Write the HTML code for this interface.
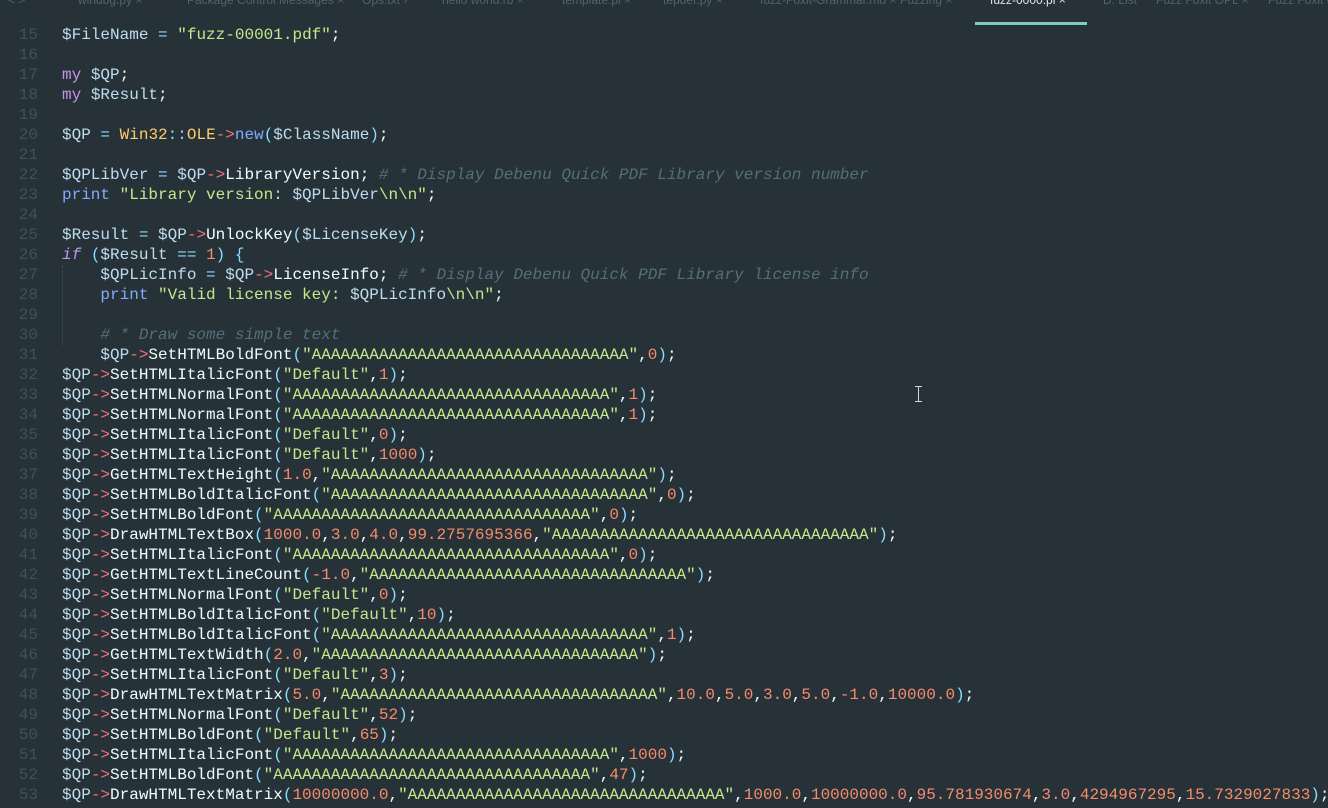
<!DOCTYPE html>
<html><head><meta charset="utf-8"><style>
body{margin:0;width:1328px;height:808px;background:#263238;overflow:hidden;position:relative;font-family:"Liberation Mono",monospace;}
.tabs{position:absolute;top:0;left:0;width:1328px;height:25px;background:#263238;font-family:"Liberation Sans",sans-serif;font-size:12px;color:#4f646e;}
.tabs span{position:absolute;top:-7px;white-space:nowrap}
.ul{position:absolute;left:975px;top:22px;width:112px;height:3px;background:#80CBC4}
.code{position:absolute;top:25px;left:0;font-size:16px;line-height:20px;white-space:pre;color:#EEFFFF}
.ln{display:inline-block;width:38px;text-align:right;color:#3d525c;margin-right:24px}
.v{color:#BFDDEE}.a{color:#F07178}.s{color:#C3E88D}.n{color:#F78C6C}.k{color:#C792EA}.p{color:#89DDFF}.b{color:#82AAFF}.y{color:#FFCB6B}.c{color:#546E7A;font-style:italic}
.guide{position:absolute;left:62px;top:266px;width:0;height:80px;border-left:1px dotted #3d525c}
.cur{position:absolute;left:915px;top:386px;width:7px;height:16px;color:#cfd8dc}
</style></head><body>
<div class="tabs">
<span style="left:8px">&lt; &gt;</span>
<span style="left:78px">windbg.py ×</span>
<span style="left:187px">Package Control Messages ×</span>
<span style="left:362px">Ops.txt ›</span>
<span style="left:442px">hello world.rb ×</span>
<span style="left:562px">template.pl ×</span>
<span style="left:663px">tepdef.py ×</span>
<span style="left:760px">fuzz-Foxit-Grammar.md ×</span>
<span style="left:900px">Fuzzing ×</span>
<span style="left:990px;color:#dfe6e9">fuzz-0000.pl ×</span>
<span style="left:1103px">D. List</span>
<span style="left:1156px">Fuzz Foxit OPL ×</span>
<span style="left:1268px">Fuzz Foxit C</span>
</div>
<div class="ul"></div>
<div class="guide"></div>
<div class="code"><span class="ln">15</span><span class="v">$FileName</span> <span class="p">=</span> <span class="s">"fuzz-00001.pdf"</span>;
<span class="ln">16</span>
<span class="ln">17</span><span class="k">my</span> <span class="v">$QP</span>;
<span class="ln">18</span><span class="k">my</span> <span class="v">$Result</span>;
<span class="ln">19</span>
<span class="ln">20</span><span class="v">$QP</span> <span class="p">=</span> <span class="y">Win32</span><span class="p">::</span><span class="y">OLE</span><span class="a">-&gt;</span><span class="b">new</span><span class="p">(</span><span class="v">$ClassName</span><span class="p">)</span>;
<span class="ln">21</span>
<span class="ln">22</span><span class="v">$QPLibVer</span> <span class="p">=</span> <span class="v">$QP</span><span class="a">-&gt;</span>LibraryVersion; <span class="c"># * Display Debenu Quick PDF Library version number</span>
<span class="ln">23</span><span class="b">print</span> <span class="s">"Library version: </span><span class="v">$QPLibVer</span><span class="s">\n\n"</span>;
<span class="ln">24</span>
<span class="ln">25</span><span class="v">$Result</span> <span class="p">=</span> <span class="v">$QP</span><span class="a">-&gt;</span>UnlockKey<span class="p">(</span><span class="v">$LicenseKey</span><span class="p">)</span>;
<span class="ln">26</span><span class="k" style="font-style:italic">if</span> <span class="p">(</span><span class="v">$Result</span> <span class="p">==</span> <span class="n">1</span><span class="p">)</span> <span class="p">{</span>
<span class="ln">27</span>    <span class="v">$QPLicInfo</span> <span class="p">=</span> <span class="v">$QP</span><span class="a">-&gt;</span>LicenseInfo; <span class="c"># * Display Debenu Quick PDF Library license info</span>
<span class="ln">28</span>    <span class="b">print</span> <span class="s">"Valid license key: </span><span class="v">$QPLicInfo</span><span class="s">\n\n"</span>;
<span class="ln">29</span>
<span class="ln">30</span>    <span class="c"># * Draw some simple text</span>
<span class="ln">31</span>    <span class="v">$QP</span><span class="a">-&gt;</span>SetHTMLBoldFont<span class="p">(</span><span class="s">"AAAAAAAAAAAAAAAAAAAAAAAAAAAAAAAAA"</span>,<span class="n">0</span><span class="p">)</span>;
<span class="ln">32</span><span class="v">$QP</span><span class="a">-&gt;</span>SetHTMLItalicFont<span class="p">(</span><span class="s">"Default"</span>,<span class="n">1</span><span class="p">)</span>;
<span class="ln">33</span><span class="v">$QP</span><span class="a">-&gt;</span>SetHTMLNormalFont<span class="p">(</span><span class="s">"AAAAAAAAAAAAAAAAAAAAAAAAAAAAAAAAA"</span>,<span class="n">1</span><span class="p">)</span>;
<span class="ln">34</span><span class="v">$QP</span><span class="a">-&gt;</span>SetHTMLNormalFont<span class="p">(</span><span class="s">"AAAAAAAAAAAAAAAAAAAAAAAAAAAAAAAAA"</span>,<span class="n">1</span><span class="p">)</span>;
<span class="ln">35</span><span class="v">$QP</span><span class="a">-&gt;</span>SetHTMLItalicFont<span class="p">(</span><span class="s">"Default"</span>,<span class="n">0</span><span class="p">)</span>;
<span class="ln">36</span><span class="v">$QP</span><span class="a">-&gt;</span>SetHTMLItalicFont<span class="p">(</span><span class="s">"Default"</span>,<span class="n">1000</span><span class="p">)</span>;
<span class="ln">37</span><span class="v">$QP</span><span class="a">-&gt;</span>GetHTMLTextHeight<span class="p">(</span><span class="n">1.0</span>,<span class="s">"AAAAAAAAAAAAAAAAAAAAAAAAAAAAAAAAA"</span><span class="p">)</span>;
<span class="ln">38</span><span class="v">$QP</span><span class="a">-&gt;</span>SetHTMLBoldItalicFont<span class="p">(</span><span class="s">"AAAAAAAAAAAAAAAAAAAAAAAAAAAAAAAAA"</span>,<span class="n">0</span><span class="p">)</span>;
<span class="ln">39</span><span class="v">$QP</span><span class="a">-&gt;</span>SetHTMLBoldFont<span class="p">(</span><span class="s">"AAAAAAAAAAAAAAAAAAAAAAAAAAAAAAAAA"</span>,<span class="n">0</span><span class="p">)</span>;
<span class="ln">40</span><span class="v">$QP</span><span class="a">-&gt;</span>DrawHTMLTextBox<span class="p">(</span><span class="n">1000.0</span>,<span class="n">3.0</span>,<span class="n">4.0</span>,<span class="n">99.2757695366</span>,<span class="s">"AAAAAAAAAAAAAAAAAAAAAAAAAAAAAAAAA"</span><span class="p">)</span>;
<span class="ln">41</span><span class="v">$QP</span><span class="a">-&gt;</span>SetHTMLItalicFont<span class="p">(</span><span class="s">"AAAAAAAAAAAAAAAAAAAAAAAAAAAAAAAAA"</span>,<span class="n">0</span><span class="p">)</span>;
<span class="ln">42</span><span class="v">$QP</span><span class="a">-&gt;</span>GetHTMLTextLineCount<span class="p">(</span><span class="n">-1.0</span>,<span class="s">"AAAAAAAAAAAAAAAAAAAAAAAAAAAAAAAAA"</span><span class="p">)</span>;
<span class="ln">43</span><span class="v">$QP</span><span class="a">-&gt;</span>SetHTMLNormalFont<span class="p">(</span><span class="s">"Default"</span>,<span class="n">0</span><span class="p">)</span>;
<span class="ln">44</span><span class="v">$QP</span><span class="a">-&gt;</span>SetHTMLBoldItalicFont<span class="p">(</span><span class="s">"Default"</span>,<span class="n">10</span><span class="p">)</span>;
<span class="ln">45</span><span class="v">$QP</span><span class="a">-&gt;</span>SetHTMLBoldItalicFont<span class="p">(</span><span class="s">"AAAAAAAAAAAAAAAAAAAAAAAAAAAAAAAAA"</span>,<span class="n">1</span><span class="p">)</span>;
<span class="ln">46</span><span class="v">$QP</span><span class="a">-&gt;</span>GetHTMLTextWidth<span class="p">(</span><span class="n">2.0</span>,<span class="s">"AAAAAAAAAAAAAAAAAAAAAAAAAAAAAAAAA"</span><span class="p">)</span>;
<span class="ln">47</span><span class="v">$QP</span><span class="a">-&gt;</span>SetHTMLItalicFont<span class="p">(</span><span class="s">"Default"</span>,<span class="n">3</span><span class="p">)</span>;
<span class="ln">48</span><span class="v">$QP</span><span class="a">-&gt;</span>DrawHTMLTextMatrix<span class="p">(</span><span class="n">5.0</span>,<span class="s">"AAAAAAAAAAAAAAAAAAAAAAAAAAAAAAAAA"</span>,<span class="n">10.0</span>,<span class="n">5.0</span>,<span class="n">3.0</span>,<span class="n">5.0</span>,<span class="n">-1.0</span>,<span class="n">10000.0</span><span class="p">)</span>;
<span class="ln">49</span><span class="v">$QP</span><span class="a">-&gt;</span>SetHTMLNormalFont<span class="p">(</span><span class="s">"Default"</span>,<span class="n">52</span><span class="p">)</span>;
<span class="ln">50</span><span class="v">$QP</span><span class="a">-&gt;</span>SetHTMLBoldFont<span class="p">(</span><span class="s">"Default"</span>,<span class="n">65</span><span class="p">)</span>;
<span class="ln">51</span><span class="v">$QP</span><span class="a">-&gt;</span>SetHTMLItalicFont<span class="p">(</span><span class="s">"AAAAAAAAAAAAAAAAAAAAAAAAAAAAAAAAA"</span>,<span class="n">1000</span><span class="p">)</span>;
<span class="ln">52</span><span class="v">$QP</span><span class="a">-&gt;</span>SetHTMLBoldFont<span class="p">(</span><span class="s">"AAAAAAAAAAAAAAAAAAAAAAAAAAAAAAAAA"</span>,<span class="n">47</span><span class="p">)</span>;
<span class="ln">53</span><span class="v">$QP</span><span class="a">-&gt;</span>DrawHTMLTextMatrix<span class="p">(</span><span class="n">10000000.0</span>,<span class="s">"AAAAAAAAAAAAAAAAAAAAAAAAAAAAAAAAA"</span>,<span class="n">1000.0</span>,<span class="n">10000000.0</span>,<span class="n">95.781930674</span>,<span class="n">3.0</span>,<span class="n">4294967295</span>,<span class="n">15.7329027833</span><span class="p">)</span>;
</div>
<svg class="cur" viewBox="0 0 7 16"><path d="M0 0.5H7M0 15.5H7M3.5 0V16" stroke="#cfd8dc" stroke-width="1" fill="none"/></svg>
</body></html>
